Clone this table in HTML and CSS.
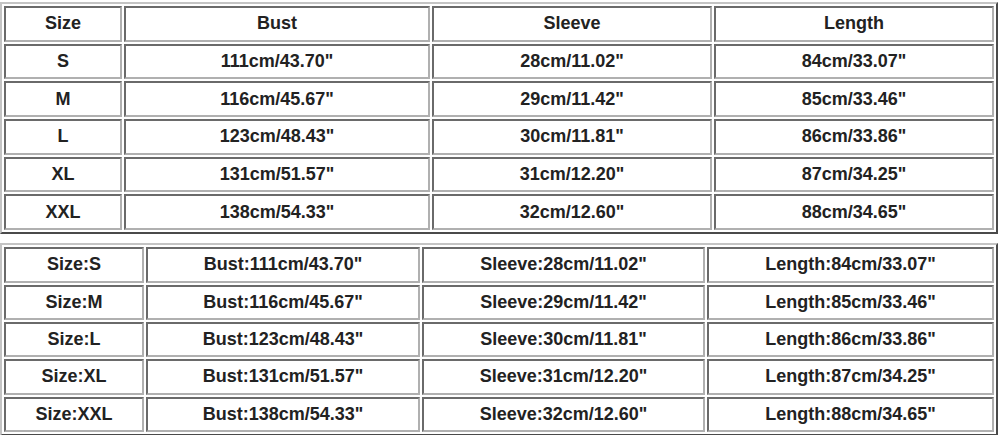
FILE: index.html
```html
<!DOCTYPE html>
<html>
<head>
<meta charset="utf-8">
<link rel="stylesheet" href="styles.css">
</head>
<body>
<table class="chart chart-a">
  <colgroup><col class="a1"><col class="a2"><col class="a3"><col class="a4"></colgroup>
  <tr><td>Size</td><td>Bust</td><td>Sleeve</td><td>Length</td></tr>
  <tr><td>S</td><td>111cm/43.70"</td><td>28cm/11.02"</td><td>84cm/33.07"</td></tr>
  <tr><td>M</td><td>116cm/45.67"</td><td>29cm/11.42"</td><td>85cm/33.46"</td></tr>
  <tr><td>L</td><td>123cm/48.43"</td><td>30cm/11.81"</td><td>86cm/33.86"</td></tr>
  <tr><td>XL</td><td>131cm/51.57"</td><td>31cm/12.20"</td><td>87cm/34.25"</td></tr>
  <tr><td>XXL</td><td>138cm/54.33"</td><td>32cm/12.60"</td><td>88cm/34.65"</td></tr>
</table>
<table class="chart chart-b">
  <colgroup><col class="b1"><col class="b2"><col class="b3"><col class="b4"></colgroup>
  <tr><td>Size:S</td><td>Bust:111cm/43.70"</td><td>Sleeve:28cm/11.02"</td><td>Length:84cm/33.07"</td></tr>
  <tr><td>Size:M</td><td>Bust:116cm/45.67"</td><td>Sleeve:29cm/11.42"</td><td>Length:85cm/33.46"</td></tr>
  <tr><td>Size:L</td><td>Bust:123cm/48.43"</td><td>Sleeve:30cm/11.81"</td><td>Length:86cm/33.86"</td></tr>
  <tr><td>Size:XL</td><td>Bust:131cm/51.57"</td><td>Sleeve:31cm/12.20"</td><td>Length:87cm/34.25"</td></tr>
  <tr><td>Size:XXL</td><td>Bust:138cm/54.33"</td><td>Sleeve:32cm/12.60"</td><td>Length:88cm/34.65"</td></tr>
</table>
</body>
</html>
```
FILE: styles.css
```css
html, body {
  margin: 0;
  padding: 0;
  background: #ffffff;
}
body {
  font-family: "Liberation Sans", Arial, sans-serif;
  overflow: hidden;
}
.chart {
  width: 998px;
  table-layout: fixed;
  border-collapse: separate;
  border-spacing: 2px;
  border-style: solid;
  border-width: 2px;
  border-color: #c4c4c4 #4a4a4a #4a4a4a #c4c4c4;
}
.chart td {
  box-sizing: border-box;
  padding: 0;
  text-align: center;
  vertical-align: middle;
  font-size: 18px;
  font-weight: bold;
  color: #222222;
  border-style: solid;
  border-width: 2px;
  border-color: #6a6a6a #b0b0b0 #b0b0b0 #6a6a6a;
}
.chart-a {
  margin-top: 2px;
}
.chart-a td {
  height: 35.7px;
}
.chart-b {
  margin-top: 9px;
}
.chart-b td {
  height: 35.4px;
}
.a1 { width: 118px; }
.a2 { width: 306px; }
.a3 { width: 280px; }
.a4 { width: 280px; }
.b1 { width: 140px; }
.b2 { width: 274px; }
.b3 { width: 283px; }
.b4 { width: 287px; }
```
